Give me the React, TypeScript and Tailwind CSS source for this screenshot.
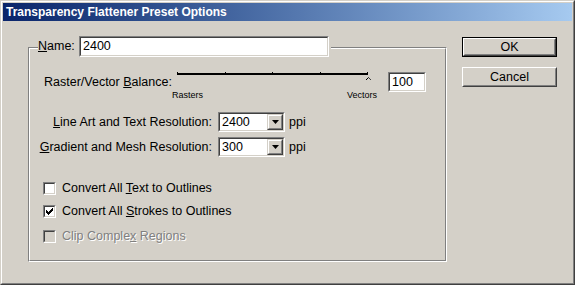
import type { ReactNode } from 'react';

function Sunken({ className = '', children }: { className?: string; children?: ReactNode }) {
  return (
    <div className={`border border-t-[#808080] border-l-[#808080] border-b-white border-r-white ${className}`}>
      <div className="flex h-full w-full items-center border border-t-[#404040] border-l-[#404040] border-b-[#d4d0c8] border-r-[#d4d0c8] bg-white">
        {children}
      </div>
    </div>
  );
}

function Button({ label, isDefault = false }: { label: string; isDefault?: boolean }) {
  const face = (
    <div className="h-full w-full border border-t-white border-l-white border-b-[#404040] border-r-[#404040]">
      <div className="flex h-full w-full items-center justify-center border border-t-[#d4d0c8] border-l-[#d4d0c8] border-b-[#808080] border-r-[#808080] bg-[#d4d0c8] text-[12.5px] text-black">
        {label}
      </div>
    </div>
  );
  return (
    <button className={`h-[20px] w-[95px] ${isDefault ? 'border border-black' : ''}`}>{face}</button>
  );
}

function Combo({ value }: { value: string }) {
  return (
    <Sunken className="ml-[6px] h-[20px] w-[67px]">
      <span className="flex-1 pl-[2px] leading-none text-black">{value}</span>
      <div className="h-full w-[16px] border border-t-[#d4d0c8] border-l-[#d4d0c8] border-b-[#404040] border-r-[#404040]">
        <div className="flex h-full w-full items-center justify-center border border-t-white border-l-white border-b-[#808080] border-r-[#808080] bg-[#d4d0c8]">
          <svg width="7" height="4" viewBox="0 0 7 4">
            <path d="M0 0h7L3.5 4z" fill="#000" />
          </svg>
        </div>
      </div>
    </Sunken>
  );
}

function CheckBox({ checked = false, disabled = false }: { checked?: boolean; disabled?: boolean }) {
  return (
    <div className="h-[13px] w-[13px] border border-t-[#808080] border-l-[#808080] border-b-white border-r-white">
      <div
        className={`flex h-full w-full items-center justify-center border border-t-[#404040] border-l-[#404040] border-b-[#d4d0c8] border-r-[#d4d0c8] ${disabled ? 'bg-[#d4d0c8]' : 'bg-white'}`}
      >
        {checked && (
          <svg width="7" height="7" viewBox="0 0 7 7" shapeRendering="crispEdges">
            <path
              d="M0 2h1v3H0z M1 3h1v3H1z M2 4h1v3H2z M3 3h1v3H3z M4 2h1v3H4z M5 1h1v3H5z M6 0h1v3H6z"
              fill="#000"
            />
          </svg>
        )}
      </div>
    </div>
  );
}

function Slider() {
  const ticks = [5, 53, 100, 148, 195];
  return (
    <div className="flex w-[205px] flex-col">
      <svg width="205" height="11" viewBox="0 0 205 11" shapeRendering="crispEdges">
        <rect x="5" y="1" width="191" height="2" fill="#000" />
        {ticks.map((t) => (
          <rect key={t} x={t} y="0" width="1" height="3" fill="#000" />
        ))}
        <path d="M193.5 8.5L196.5 5.5" stroke="#000" strokeWidth="1" fill="none" />
        <path d="M196.5 5.5L199.5 8.5" stroke="#404040" strokeWidth="1" fill="none" />
      </svg>
      <div className="mt-[6px] flex h-[12px] justify-between text-[9px] leading-[12px] text-black">
        <span>Rasters</span>
        <span>Vectors</span>
      </div>
    </div>
  );
}

export default function App() {
  return (
    <div className="h-[285px] w-[575px] border border-t-[#d4d0c8] border-l-[#d4d0c8] border-b-[#404040] border-r-[#404040] bg-[#d4d0c8] font-['Liberation_Sans',Arial,sans-serif] text-[12.5px] text-black">
      <div className="h-full w-full border border-t-white border-l-white border-b-[#808080] border-r-[#808080] p-px">
        <div className="flex h-[18px] items-center bg-gradient-to-r from-[#0a246a] to-[#a6caf0] pl-[3px] text-[12px] font-bold text-white">
          Transparency Flattener Preset Options
        </div>

        <div className="flex items-start pl-[25px]">
          {/* group box */}
          <div className="mt-[26px] h-[215px] w-[419px] border border-t-[#808080] border-l-[#808080] border-b-white border-r-white">
            <div className="h-full w-full border border-t-white border-l-white border-b-[#808080] border-r-[#808080]">
              <div className="-mt-[13px] ml-[8px] flex w-fit items-center bg-[#d4d0c8] pr-[2px]">
                <span className="w-[41px]">
                  <u>N</u>ame:
                </span>
                <Sunken className="h-[21px] w-[250px]">
                  <span className="pl-[2px]">2400</span>
                </Sunken>
              </div>

              <div className="ml-[14px] mt-[15px] flex items-start">
                <span className="flex h-[20px] w-[128px] items-center whitespace-nowrap">
                  Raster/Vector&nbsp;<u>B</u>alance:
                </span>
                <Slider />
                <Sunken className="ml-[11px] h-[20px] w-[38px]">
                  <span className="pl-[2px]">100</span>
                </Sunken>
              </div>

              <div className="mt-[11px] flex h-[20px] items-center">
                <span className="w-[182px] whitespace-nowrap text-right">
                  <u>L</u>ine Art and Text Resolution:
                </span>
                <Combo value="2400" />
                <span className="ml-[4px]">ppi</span>
              </div>

              <div className="mt-[5px] flex h-[20px] items-center">
                <span className="w-[182px] whitespace-nowrap text-right">
                  <u>G</u>radient and Mesh Resolution:
                </span>
                <Combo value="300" />
                <span className="ml-[4px]">ppi</span>
              </div>

              <div className="ml-[13px] mt-[25px] flex h-[13px] items-center">
                <CheckBox />
                <span className="ml-[6px]">
                  Convert All <u>T</u>ext to Outlines
                </span>
              </div>

              <div className="ml-[13px] mt-[10px] flex h-[13px] items-center">
                <CheckBox checked />
                <span className="ml-[6px]">
                  Convert All <u>S</u>trokes to Outlines
                </span>
              </div>

              <div className="ml-[13px] mt-[12px] flex h-[13px] items-center">
                <CheckBox disabled />
                <span className="ml-[6px] text-[#808080] [text-shadow:1px_1px_0_#fff]">
                  Clip Comple<u>x</u> Regions
                </span>
              </div>
            </div>
          </div>

          <div className="ml-[15px] mt-[16px] flex flex-col gap-[10px]">
            <Button label="OK" isDefault />
            <Button label="Cancel" />
          </div>
        </div>
      </div>
    </div>
  );
}
